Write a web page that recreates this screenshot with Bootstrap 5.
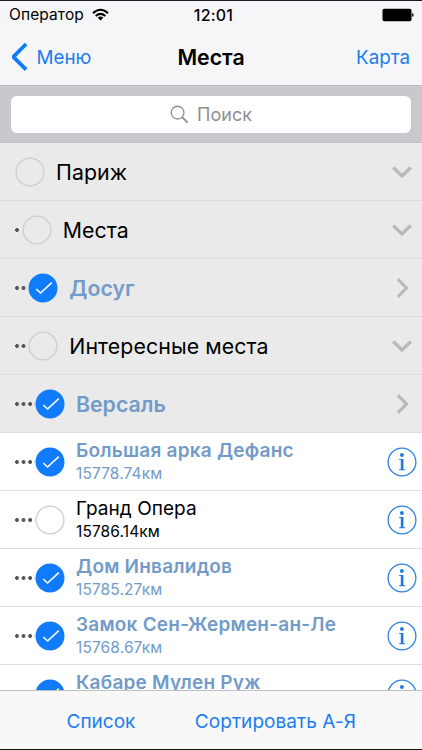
<!DOCTYPE html>
<html lang="ru">
<head>
<meta charset="utf-8">
<meta name="viewport" content="width=device-width, initial-scale=1">
<title>Места</title>
<link rel="stylesheet" href="https://cdn.jsdelivr.net/npm/bootstrap@5.3.0/dist/css/bootstrap.min.css">
<style>
body{font-family:Inter,"Liberation Sans",sans-serif;height:750px;overflow:hidden;background:#fff;color:#000;white-space:nowrap}
svg{display:block;flex:none}
.screen{height:750px;border-top:1px solid #1a1a1e;border-bottom:1px solid #111}
.head{background:#f6f6f8;height:84px}
.status{height:28px;font-size:15.5px;line-height:28px;padding:0 8px 0 9px}
.carrier{letter-spacing:.1px}
.side{flex:1 1 0}
.clock{font-weight:500;font-size:16px;letter-spacing:.2px;padding-left:4px}
.bar{height:56px;line-height:56px;font-size:19px;padding:0 12px}
.bar a,.tools a{color:#1a7df0;text-decoration:none}
.menu,.map{font-size:18.8px;padding-top:2px}
.map{display:inline-block}
.heading{font-size:21.3px;font-weight:600;line-height:56px}
.find{background:#c9c8cf;height:58px;border-top:1px solid #bdbcc3;border-bottom:1px solid #bfbec6;padding:10px 11px}
.field{background:#fff;border-radius:6px;height:37px;color:#8e8e93;font-size:18px}
.places{height:547px;overflow:hidden}
.place{height:58px;box-shadow:inset 0 -1px #dddde1;padding-left:14.5px;padding-right:5.5px}
.group{background:#eaeaea;padding-right:6.5px}
.name{font-size:19px;line-height:24px;letter-spacing:.05px}
.group .name{font-size:21.3px;letter-spacing:.1px}
.far{font-size:15.5px;line-height:20px;min-height:20px;letter-spacing:.12px}
.chosen{color:#729bc9}
.chosen .name{font-weight:600;letter-spacing:.22px}
.chosen.group .name{letter-spacing:0}
.dots{height:4px;background:radial-gradient(circle at 2px 2px,#555 1.6px,transparent 2.2px) 0 0/6.6px 4px repeat-x}
.d0{width:0}.d1{width:6.7px}.d2{width:13.3px}.d3{width:20px}
.pick{margin-left:.6px;margin-right:10.9px}
.label{padding-bottom:1px}
.label .far{padding-top:1px;min-height:21px}
.tools{background:#f8f8f8;border-top:1px solid #c0c0c2;height:59px;line-height:61px;font-size:19px;padding:0 66px 0 66.5px}
.tools a:last-child{letter-spacing:.06px}
</style>
</head>
<body>
<svg width="0" height="0" class="d-none">
<symbol id="off" viewBox="0 0 30 30"><circle cx="15" cy="15" r="13.9" fill="none" stroke="#cdcdd2" stroke-width="1.3"/></symbol>
<symbol id="on" viewBox="0 0 30 30"><circle cx="15" cy="15" r="14.5" fill="#117cfb"/><path d="M8.2 16l4.400 4L23.800 9.600" fill="none" stroke="#fff" stroke-width="1.600"/></symbol>
<symbol id="down" viewBox="0 0 20 20"><path d="M1.200 5.500l8.800 8.500 8.800-8.500" fill="none" stroke="#b9b9b9" stroke-width="3.200"/></symbol>
<symbol id="right" viewBox="0 0 20 20"><path d="M5.800 1.200l8.700 8.800-8.700 8.800" fill="none" stroke="#b9b9b9" stroke-width="3.200"/></symbol>
<symbol id="info" viewBox="0 0 30 30"><circle cx="15" cy="15" r="13.900" fill="none" stroke="#2f82e4" stroke-width="1.300"/><circle cx="14.900" cy="8" r="1.900" fill="#1d78e2"/><path d="M12.200 12h4.200v10.300h1.600v.9h-5.800v-.9h1.600v-9.400h-1.600z" fill="#1d78e2"/></symbol>
</svg>
<div class="screen d-flex flex-column">
<header class="head">
<div class="status d-flex align-items-center">
<div class="side d-flex align-items-center"><span class="carrier">Оператор</span>
<svg class="ms-2" width="17" height="14" viewBox="0 0 17 14"><g fill="none" stroke="#000" stroke-width="2"><path d="M1 5.200Q8.500-1.700 16 5.200"/><path d="M3.700 8Q8.500 3.700 13.300 8"/></g><path d="M5.700 9.800Q8.500 7.300 11.300 9.800L8.500 12.600z"/></svg></div>
<div class="clock">12:01</div>
<div class="side d-flex justify-content-end"><svg width="32" height="14" viewBox="0 0 32 14"><rect x=".5" y=".8" width="29" height="12.400" rx="1.800"/><path d="M30.200 5q1.500.3 1.500 2t-1.500 2z"/></svg></div>
</div>
<nav class="bar d-flex align-items-center">
<div class="side"><a href="#" class="d-flex align-items-center"><svg width="24.500" height="30" viewBox="12.500 0 24.500 30"><path d="M26.600 2L13.800 14.800l12.800 12.800" fill="none" stroke="#117cfb" stroke-width="3.800"/></svg><span class="menu">Меню</span></a></div>
<h1 class="heading m-0">Места</h1>
<div class="side text-end"><a href="#" class="map">Карта</a></div>
</nav>
</header>
<div class="find"><div class="field d-flex align-items-center justify-content-center"><svg class="me-2" width="19" height="19" viewBox="0 0 20 20"><g fill="none" stroke="#8e8e93" stroke-width="1.400"><circle cx="8" cy="8" r="6.700"/><path d="M12.800 12.800l5.700 5.700" stroke-width="2"/></g></svg><span>Поиск</span></div></div>
<main class="places">
<div class="place group d-flex align-items-center"><i class="dots d0"></i><svg class="pick" width="30" height="30"><use href="#off"/></svg><div class="name me-auto">Париж</div><svg class="me-1" width="20" height="20"><use href="#down"/></svg></div>
<div class="place group d-flex align-items-center"><i class="dots d1"></i><svg class="pick" width="30" height="30"><use href="#off"/></svg><div class="name me-auto">Места</div><svg class="me-1" width="20" height="20"><use href="#down"/></svg></div>
<div class="place group chosen d-flex align-items-center"><i class="dots d2"></i><svg class="pick" width="30" height="30"><use href="#on"/></svg><div class="name me-auto">Досуг</div><svg class="me-1" width="20" height="20"><use href="#right"/></svg></div>
<div class="place group d-flex align-items-center"><i class="dots d2"></i><svg class="pick" width="30" height="30"><use href="#off"/></svg><div class="name me-auto">Интересные места</div><svg class="me-1" width="20" height="20"><use href="#down"/></svg></div>
<div class="place group chosen d-flex align-items-center"><i class="dots d3"></i><svg class="pick" width="30" height="30"><use href="#on"/></svg><div class="name me-auto">Версаль</div><svg class="me-1" width="20" height="20"><use href="#right"/></svg></div>
<div class="place chosen d-flex align-items-center"><i class="dots d3"></i><svg class="pick" width="30" height="30"><use href="#on"/></svg><div class="label me-auto"><div class="name">Большая арка Дефанс</div><div class="far">15778.74км</div></div><svg width="30" height="30"><use href="#info"/></svg></div>
<div class="place d-flex align-items-center"><i class="dots d3"></i><svg class="pick" width="30" height="30"><use href="#off"/></svg><div class="label me-auto"><div class="name">Гранд Опера</div><div class="far">15786.14км</div></div><svg width="30" height="30"><use href="#info"/></svg></div>
<div class="place chosen d-flex align-items-center"><i class="dots d3"></i><svg class="pick" width="30" height="30"><use href="#on"/></svg><div class="label me-auto"><div class="name">Дом Инвалидов</div><div class="far">15785.27км</div></div><svg width="30" height="30"><use href="#info"/></svg></div>
<div class="place chosen d-flex align-items-center"><i class="dots d3"></i><svg class="pick" width="30" height="30"><use href="#on"/></svg><div class="label me-auto"><div class="name">Замок Сен-Жермен-ан-Ле</div><div class="far">15768.67км</div></div><svg width="30" height="30"><use href="#info"/></svg></div>
<div class="place chosen d-flex align-items-center"><i class="dots d3"></i><svg class="pick" width="30" height="30"><use href="#on"/></svg><div class="label me-auto"><div class="name">Кабаре Мулен Руж</div><div class="far"></div></div><svg width="30" height="30"><use href="#info"/></svg></div>
</main>
<footer class="tools d-flex justify-content-between"><a href="#">Список</a><a href="#">Сортировать А-Я</a></footer>
</div>
<script src="https://cdn.jsdelivr.net/npm/bootstrap@5.3.0/dist/js/bootstrap.bundle.min.js"></script>
</body>
</html>
